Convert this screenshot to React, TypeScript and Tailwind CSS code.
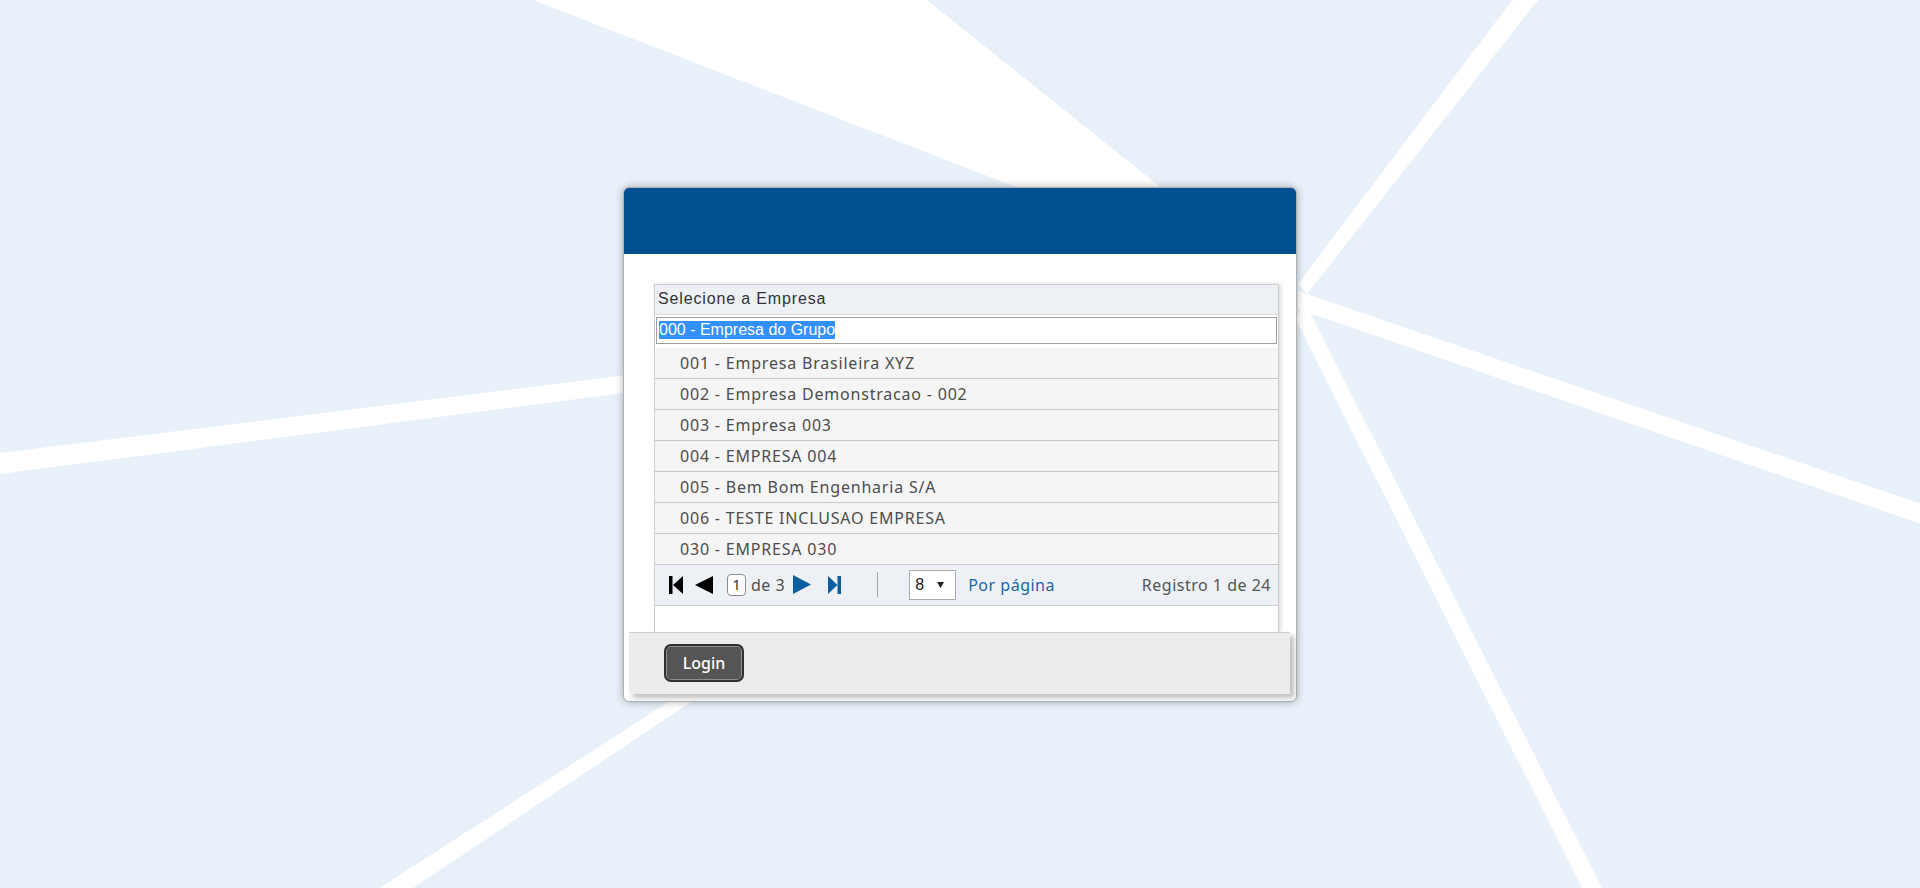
const empresas = [
  '001 - Empresa Brasileira XYZ',
  '002 - Empresa Demonstracao - 002',
  '003 - Empresa 003',
  '004 - EMPRESA 004',
  '005 - Bem Bom Engenharia S/A',
  '006 - TESTE INCLUSAO EMPRESA',
  '030 - EMPRESA 030',
];

// white rays behind the login box
function Background() {
  return (
    <svg
      className="absolute inset-0 h-full w-full"
      viewBox="0 0 1920 888"
      preserveAspectRatio="none"
    >
      <polygon fill="#ffffff" points="533,0 927,0 1295,295" />
      <polygon fill="#ffffff" points="1516,-5 1542,-5 1307,294 1298,284" />
      <polygon fill="#ffffff" points="1298,291 1930,507 1930,527 1298,309" />
      <polygon fill="#ffffff" points="1295,318 1305,303 1608,900 1588,900" />
      <polygon fill="#ffffff" points="0,453 700,366 700,383 0,474" />
      <polygon fill="#ffffff" points="361,900 395,900 769,650 749,650" />
    </svg>
  );
}

function Pager() {
  return (
    <div className="flex h-[41px] items-center border-b border-[#cdcdcd] bg-[#edf1f6] pl-[14px] pr-[7px] font-['Noto_Sans',sans-serif] text-[16px] tracking-[0.5px]">
      <svg width="14" height="18" viewBox="0 0 14 18">
        <rect x="0" y="0" width="3.5" height="18" fill="#000" />
        <polygon points="14,0 4,9 14,18" fill="#000" />
      </svg>
      <svg className="ml-[12px]" width="18" height="18" viewBox="0 0 18 18">
        <polygon points="18,0 0,9 18,18" fill="#000" />
      </svg>
      <div className="ml-[14px] flex h-[22px] w-[19px] items-center justify-center rounded-[4px] border border-[#8c8c8c] bg-white text-[15px] tracking-normal text-[#333]">
        1
      </div>
      <span className="ml-[5px] text-[#4d4d4d]">de 3</span>
      <svg className="ml-[8px]" width="18" height="19" viewBox="0 0 18 19">
        <polygon points="0,0 18,9.5 0,19" fill="#0b5e9f" />
      </svg>
      <svg className="ml-[17px]" width="13" height="18" viewBox="0 0 13 18">
        <polygon points="0,0 9.5,9 0,18" fill="#0b5e9f" />
        <rect x="9.5" y="0" width="3.5" height="18" fill="#0b5e9f" />
      </svg>
      <div className="ml-[36px] h-[25px] w-px bg-[#a8a8a8]" />
      <div className="ml-[31px] flex h-[30px] w-[47px] items-center border border-[#ababab] bg-white pl-[5px] font-['Liberation_Sans',Arial,sans-serif] text-[16px] tracking-normal text-[#222]">
        8
        <svg className="ml-auto mr-[11px]" width="7" height="6" viewBox="0 0 7 6">
          <polygon points="0,0 7,0 3.5,6" fill="#222" />
        </svg>
      </div>
      <span className="ml-[12px] text-[#1d64a8]">Por página</span>
      <span className="ml-auto text-[#555]">Registro 1 de 24</span>
    </div>
  );
}

export default function App() {
  return (
    <div className="relative flex h-screen w-full items-center justify-center overflow-hidden bg-[#e8f1f9]">
      <Background />

      <div className="relative flex h-[515px] w-[674px] flex-col rounded-[6px] border border-[#b0b0b0] bg-white shadow-[0_0_8px_rgba(0,0,0,0.3)]">
        <div className="h-[66px] rounded-t-[5px] bg-[#005092]" />

        {/* company picker */}
        <div className="ml-[30px] mt-[30px] flex h-[348px] w-[625px] flex-col border border-b-0 border-[#cdcdcd] bg-white shadow-[2px_0_4px_rgba(0,0,0,0.15)]">
          <div className="flex h-[30px] items-center border-b border-[#dcdcdc] bg-[#edf1f6] pl-[3px] font-['Liberation_Sans',Arial,sans-serif] text-[16px] tracking-[0.85px] text-[#333]">
            Selecione a Empresa
          </div>
          <div className="px-[1px] pt-[2px] pb-[4px]">
            <div className="flex h-[27px] items-center border border-[#a0a0a0] bg-white pl-[2px] font-['Liberation_Sans',Arial,sans-serif] text-[16px]">
              <span className="bg-[#3390ff] leading-[18px] text-white">000 - Empresa do Grupo</span>
            </div>
          </div>
          {empresas.map((e) => (
            <div
              key={e}
              className="flex h-[31px] items-center border-b border-[#c8c8c8] bg-[#f5f5f5] pl-[25px] font-['Noto_Sans',sans-serif] text-[16px] tracking-[0.8px] text-[#4d4d4d]"
            >
              {e}
            </div>
          ))}
          <Pager />
          <div className="h-[26px]" />
        </div>

        {/* footer */}
        <div className="ml-[5px] mr-[6px] flex h-[62px] items-center border-t border-[#cfcfcf] bg-[#ececec] pl-[35px] shadow-[4px_4px_5px_rgba(0,0,0,0.25)]">
          <button className="h-[38px] w-[80px] rounded-[7px] border-2 border-[#2f2f2f] bg-[#555555] font-['Noto_Sans',sans-serif] text-[16px] font-medium text-white shadow-[inset_0_0_0_1px_#8f8f8f]">
            Login
          </button>
        </div>
      </div>
    </div>
  );
}
